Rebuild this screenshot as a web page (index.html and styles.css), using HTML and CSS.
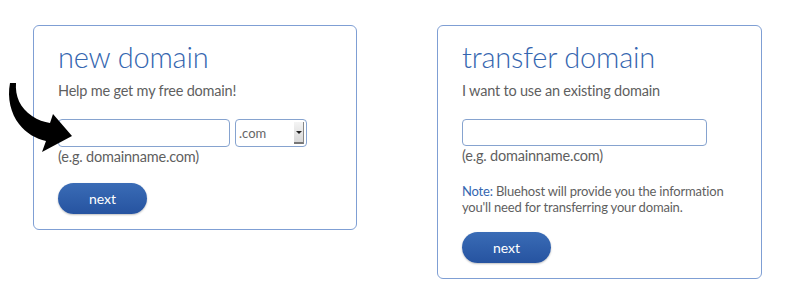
FILE: index.html
```html
<!DOCTYPE html>
<html>
<head>
  <meta charset="utf-8">
  <title>Choose a domain</title>
  <link rel="stylesheet" href="styles.css">
</head>
<body>
  <section class="domain-section">
    <div class="domain-box">
      <h1>new domain</h1>
      <p class="lead">Help me get my free domain!</p>
      <div class="field-row">
        <div class="text-field wide"></div>
        <div class="tld-select">
          <span>.com</span>
          <span class="tld-arrow"></span>
        </div>
      </div>
      <p class="hint">(e.g. domainname.com)</p>
      <button class="next-btn">next</button>
    </div>

    <div class="domain-box">
      <h1>transfer domain</h1>
      <p class="lead">I want to use an existing domain</p>
      <div class="field-row">
        <div class="text-field long"></div>
      </div>
      <p class="hint">(e.g. domainname.com)</p>
      <p class="note"><span class="note-label">Note:</span> Bluehost will provide you the information<br>you'll need for transferring your domain.</p>
      <button class="next-btn">next</button>
    </div>
  </section>

  <!-- flecha que señala el campo -->
  <svg class="pointer-arrow" width="80" height="85" viewBox="0 75 80 85">
    <path d="M10 83 L16 83 C15 96 20 108 32 116 C38 120 44 122 50 123 L53 114 L72 136 L42 152 L46 141 C36 139 26 133 19 124 C11 114 7 98 10 83 Z" fill="#000"/>
  </svg>
</body>
</html>
```

FILE: styles.css
```css
body {
  margin: 0;
  background: #fff;
  font-family: 'Lato', 'Open Sans', sans-serif;
  color: #5f5f5f;
}

.domain-section {
  display: flex;
  align-items: flex-start;
  gap: 80px;
  padding: 25px 0 0 33px;
}

.domain-box {
  width: 324px;
  box-sizing: border-box;
  border: 1px solid #7f9fd4;
  border-radius: 6px;
  padding: 13px 24px 15px;
}

.domain-box:last-child {
  width: 325px;
}

.domain-box h1 {
  margin: 0;
  font-size: 29px;
  line-height: 36px;
  font-weight: 300;
  letter-spacing: -0.2px;
  color: #3566b0;
}

.lead {
  margin: 6px 0 0;
  font-size: 14.5px;
  line-height: 20px;
  letter-spacing: -0.2px;
}

.field-row {
  display: flex;
  gap: 5px;
  margin-top: 18px;
}

.text-field {
  height: 28px;
  box-sizing: border-box;
  border: 1.5px solid #86a3cf;
  border-radius: 4px;
  background: #fff;
}

.text-field.wide {
  width: 172px;
}

.text-field.long {
  width: 245px;
  height: 27px;
}

.tld-select {
  width: 72px;
  height: 28px;
  box-sizing: border-box;
  border: 1.5px solid #86a3cf;
  border-radius: 4px;
  display: flex;
  align-items: center;
  justify-content: space-between;
  padding: 0 2px 0 3px;
  font-size: 13px;
  color: #666;
}

.tld-arrow {
  position: relative;
  width: 9px;
  height: 20px;
  background: linear-gradient(#f4f4f4, #d8d8d8);
  border-right: 1px solid #888;
  border-bottom: 2px solid #777;
}

.tld-arrow::after {
  content: "";
  position: absolute;
  left: 2px;
  top: 9px;
  border-left: 3px solid transparent;
  border-right: 3px solid transparent;
  border-top: 3px solid #222;
}

.hint {
  margin: 0;
  font-size: 14.5px;
  line-height: 20px;
  letter-spacing: -0.2px;
}

.note {
  margin: 17px 0 0;
  font-size: 13px;
  line-height: 16px;
  letter-spacing: -0.18px;
}

.note-label {
  color: #3566b0;
}

.next-btn {
  display: block;
  margin-top: 16px;
  width: 89px;
  height: 31px;
  border: none;
  border-radius: 16px;
  background: linear-gradient(#3a6cb6, #2653a0);
  box-shadow: 0 1px 2px rgba(0, 0, 0, 0.25);
  color: #fff;
  font-family: 'Lato', sans-serif;
  font-size: 14px;
  cursor: pointer;
}

.note + .next-btn {
  margin-top: 17px;
}

.pointer-arrow {
  position: absolute;
  left: 0;
  top: 75px;
}
```
